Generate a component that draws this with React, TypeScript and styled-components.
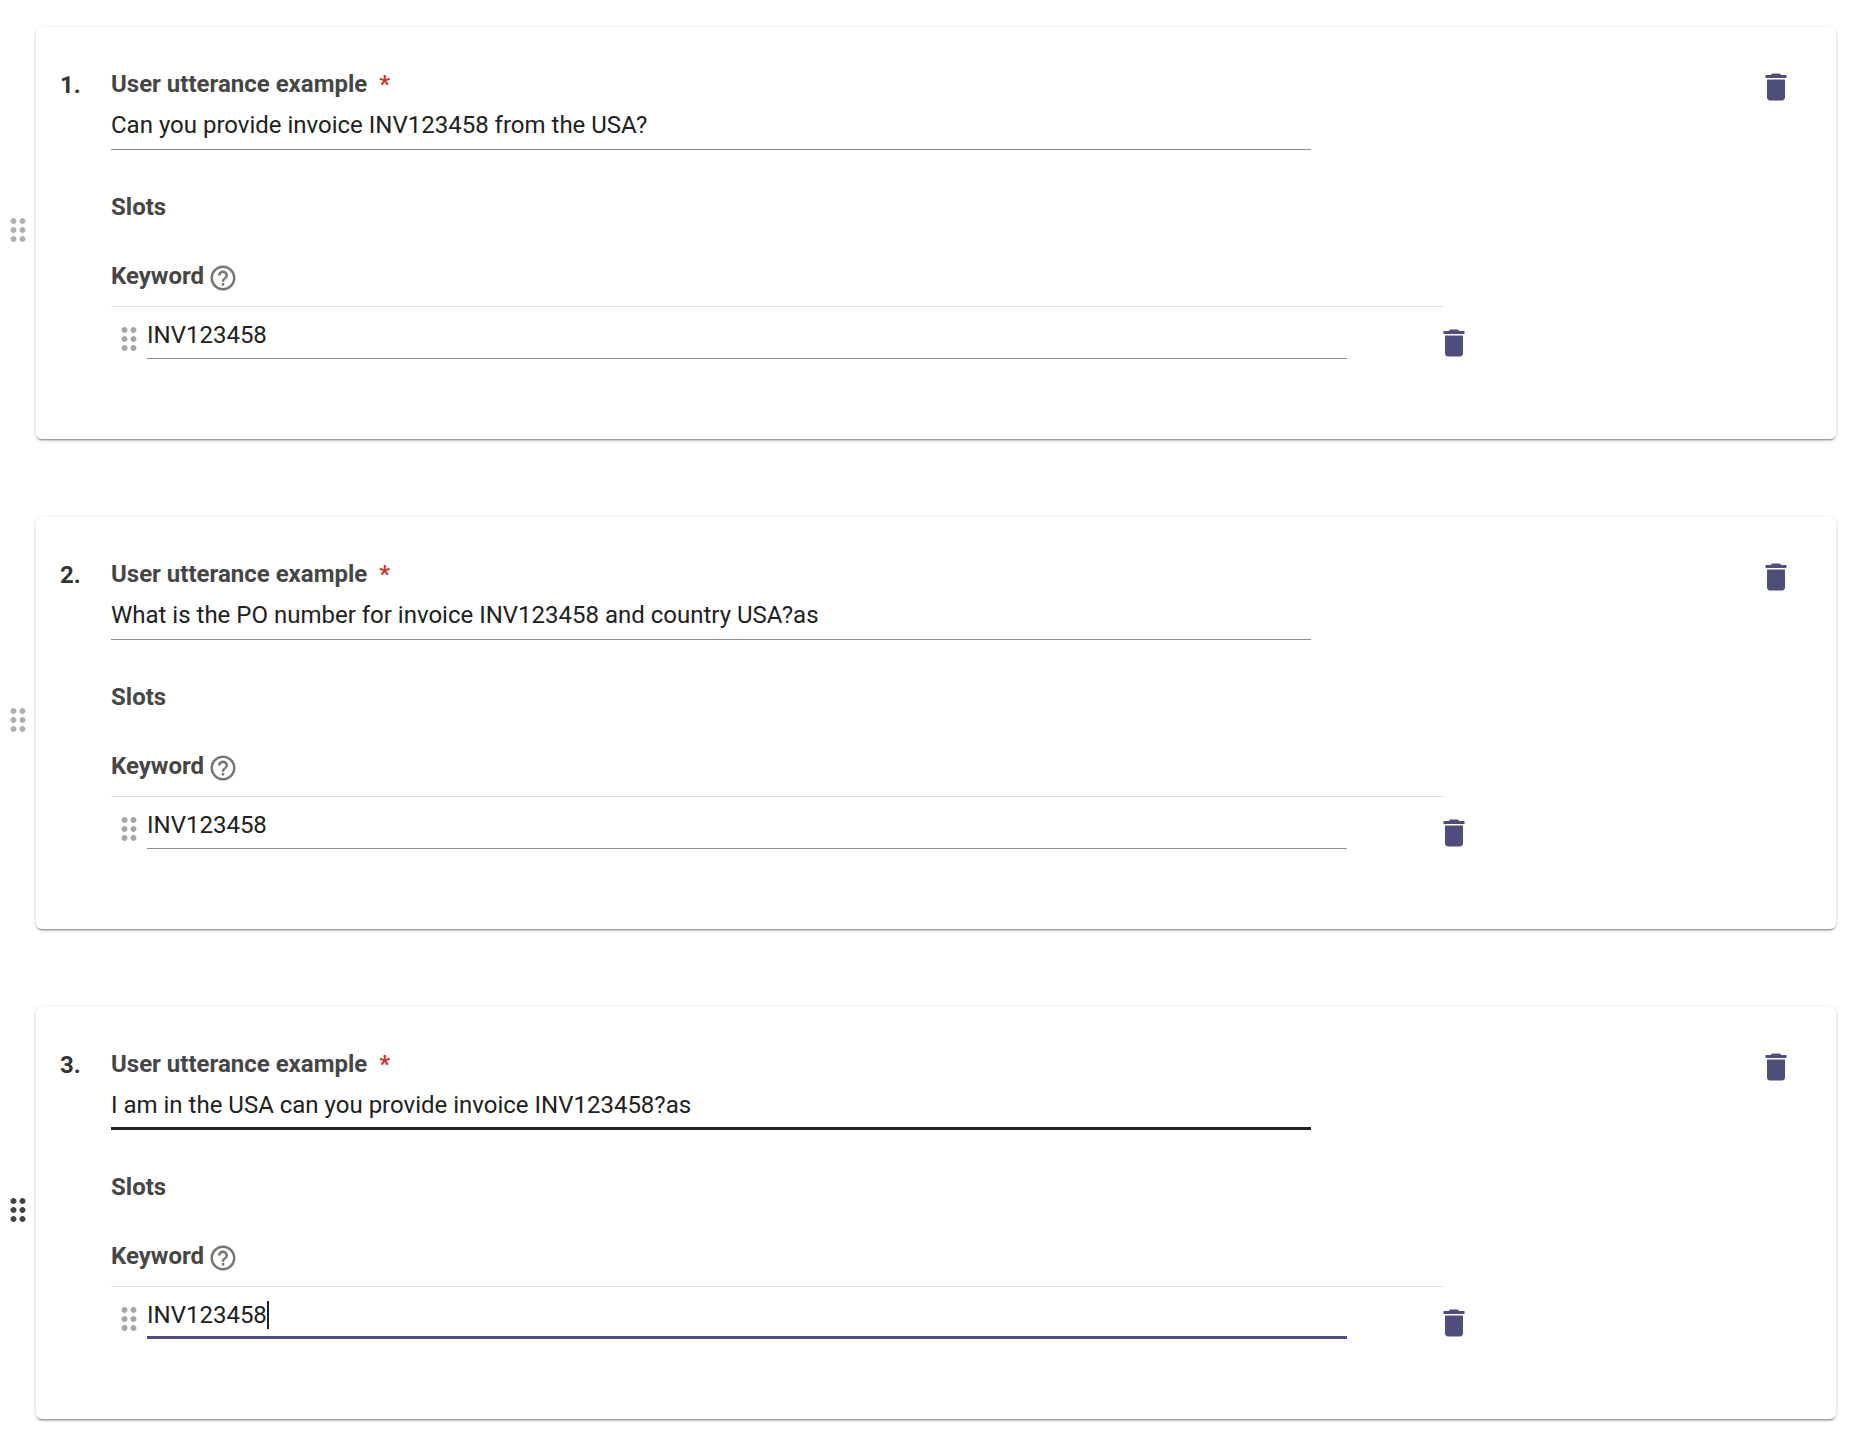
import { useState } from "react";
import styled, { createGlobalStyle } from "styled-components";

const GlobalStyle = createGlobalStyle`
  * { box-sizing: border-box; }
  body {
    margin: 0;
    background: #fff;
    color: #212121;
    font-family: Roboto, "Liberation Sans", sans-serif;
    font-size: 24px;
    line-height: 28px;
  }
`;

const ExampleList = styled.ol`
  display: flex;
  flex-direction: column;
  gap: 78px;
  margin: 0;
  padding: 27px 26px 19px 0;
  list-style: none;
`;

const ExampleRow = styled.li`
  display: flex;
  align-items: center;
`;

const HandleColumn = styled.div`
  flex: none;
  padding-bottom: 6px;
`;

const IconButton = styled.button<{ $color: string; $height: number }>`
  display: flex;
  flex: none;
  align-items: center;
  justify-content: center;
  width: 36px;
  height: ${(p) => p.$height}px;
  padding: 0;
  border: 0;
  background: none;
  color: ${(p) => p.$color};
  cursor: pointer;
`;

const Icon = styled.svg<{ $size: number }>`
  display: block;
  width: ${(p) => p.$size}px;
  height: ${(p) => p.$size}px;
  fill: currentColor;
`;

const Card = styled.section`
  display: flex;
  flex: 1;
  align-items: flex-start;
  min-width: 0;
  padding: 38px 42px 74px 24px;
  border-radius: 6px;
  background: #fff;
  box-shadow:
    0 3px 1px -2px rgba(0, 0, 0, 0.24),
    0 2px 2px 0 rgba(0, 0, 0, 0.16),
    0 1px 5px 0 rgba(0, 0, 0, 0.12);
`;

const Position = styled.span`
  flex: none;
  width: 51px;
  padding-top: 6px;
  color: #333;
  font-weight: 700;
`;

const Content = styled.div`
  flex: 1;
  min-width: 0;
  padding-top: 5px;
`;

const Label = styled.label`
  display: block;
  color: #464646;
  font-weight: 700;
`;

const Required = styled.span`
  margin-left: 6px;
  color: #c9372c;
`;

const SlotsTitle = styled.h3`
  margin: 43px 0 41px;
  color: #464646;
  font-size: 24px;
  font-weight: 700;
  line-height: 28px;
`;

type LineState = "rest" | "hover" | "focus";

const lineStyles: Record<LineState, string> = {
  rest: "1px solid #8f8f8f",
  hover: "3px solid #212121",
  focus: "3px solid #4f4d7b",
};

const Field = styled.div<{ $line: LineState }>`
  display: flex;
  align-items: flex-start;
  width: 100%;
  max-width: 1200px;
  height: 38px;
  border-bottom: ${(p) => lineStyles[p.$line]};
`;

const UtteranceField = styled(Field)`
  height: 39px;
  margin-top: 13px;
`;

const TextInput = styled.input<{ $hug: boolean }>`
  ${(p) => (p.$hug ? "field-sizing: content;" : "flex: 1;")}
  min-width: 0;
  height: 28px;
  padding: 0;
  border: 0;
  outline: 0;
  background: none;
  color: #212121;
  font: inherit;
  caret-color: transparent;
`;

const Caret = styled.span`
  width: 2px;
  height: 28px;
  background: #212121;
`;

const SlotGroup = styled.div`
  max-width: 1361px;
`;

const SlotHeader = styled.div`
  display: flex;
  gap: 4px;
  height: 45px;
  margin-right: 28px;
  border-bottom: 1px solid #e0e0e0;
`;

const HelpButton = styled(IconButton)`
  width: 30px;
  margin-top: 1px;
`;

const SlotRow = styled.div`
  display: flex;
  align-items: flex-start;
  padding-top: 14px;
`;

const SlotEnd = styled.div`
  display: flex;
  flex: 1;
  justify-content: flex-end;
`;

const PATHS = {
  drag: "M11 18c0 1.1-.9 2-2 2s-2-.9-2-2 .9-2 2-2 2 .9 2 2zm-2-8c-1.1 0-2 .9-2 2s.9 2 2 2 2-.9 2-2-.9-2-2-2zm0-6c-1.1 0-2 .9-2 2s.9 2 2 2 2-.9 2-2-.9-2-2-2zm6 4c1.1 0 2-.9 2-2s-.9-2-2-2-2 .9-2 2 .9 2 2 2zm0 2c-1.1 0-2 .9-2 2s.9 2 2 2 2-.9 2-2-.9-2-2-2zm0 6c-1.1 0-2 .9-2 2s.9 2 2 2 2-.9 2-2-.9-2-2-2z",
  trash:
    "M6 19c0 1.1.9 2 2 2h8c1.1 0 2-.9 2-2V7H6v12zM19 4h-3.5l-1-1h-5l-1 1H5v2h14V4z",
  help: "M11 18h2v-2h-2v2zm1-16C6.48 2 2 6.48 2 12s4.48 10 10 10 10-4.48 10-10S17.52 2 12 2zm0 18c-4.41 0-8-3.59-8-8s3.59-8 8-8 8 3.59 8 8-3.59 8-8 8zm0-14c-2.21 0-4 1.79-4 4h2c0-1.1.9-2 2-2s2 .9 2 2c0 2-3 1.75-3 5h2c0-2.25 3-2.5 3-5 0-2.21-1.79-4-4-4z",
};

function Glyph({ name, size = 36 }: { name: keyof typeof PATHS; size?: number }) {
  return (
    <Icon $size={size} viewBox="0 0 24 24" aria-hidden="true">
      <path d={PATHS[name]} />
    </Icon>
  );
}

interface Example {
  utterance: string;
  keyword: string;
  active: boolean;
}

const EXAMPLES: Example[] = [
  {
    utterance: "Can you provide invoice INV123458 from the USA?",
    keyword: "INV123458",
    active: false,
  },
  {
    utterance: "What is the PO number for invoice INV123458 and country USA?as",
    keyword: "INV123458",
    active: false,
  },
  {
    utterance: "I am in the USA can you provide invoice INV123458?as",
    keyword: "INV123458",
    active: true,
  },
];

function ExampleItem({ example, index }: { example: Example; index: number }) {
  const [utterance, setUtterance] = useState(example.utterance);
  const [keyword, setKeyword] = useState(example.keyword);
  const utteranceId = `utterance-${index}`;
  const keywordId = `keyword-${index}`;
  const { active } = example;

  return (
    <ExampleRow>
      <HandleColumn>
        <IconButton
          type="button"
          $color={active ? "#424242" : "#b0b0b0"}
          $height={36}
          aria-label="Reorder example"
        >
          <Glyph name="drag" />
        </IconButton>
      </HandleColumn>
      <Card>
        <Position>{index + 1}.</Position>
        <Content>
          <Label htmlFor={utteranceId}>
            User utterance example <Required>*</Required>
          </Label>
          <UtteranceField $line={active ? "hover" : "rest"}>
            <TextInput
              id={utteranceId}
              $hug={false}
              value={utterance}
              onChange={(e) => setUtterance(e.target.value)}
              required
            />
          </UtteranceField>
          <SlotsTitle>Slots</SlotsTitle>
          <SlotGroup>
            <SlotHeader>
              <Label htmlFor={keywordId}>Keyword</Label>
              <HelpButton
                type="button"
                $color="#757575"
                $height={30}
                aria-label="About keywords"
              >
                <Glyph name="help" size={30} />
              </HelpButton>
            </SlotHeader>
            <SlotRow>
              <IconButton
                type="button"
                $color="#a6a6a6"
                $height={36}
                aria-label="Reorder slot"
              >
                <Glyph name="drag" />
              </IconButton>
              <Field $line={active ? "focus" : "rest"}>
                <TextInput
                  id={keywordId}
                  $hug={active}
                  value={keyword}
                  onChange={(e) => setKeyword(e.target.value)}
                />
                {active && <Caret />}
              </Field>
              <SlotEnd>
                <IconButton
                  type="button"
                  $color="#4f4d7b"
                  $height={44}
                  aria-label="Delete slot"
                >
                  <Glyph name="trash" />
                </IconButton>
              </SlotEnd>
            </SlotRow>
          </SlotGroup>
        </Content>
        <IconButton
          type="button"
          $color="#4f4d7b"
          $height={44}
          aria-label="Delete example"
        >
          <Glyph name="trash" />
        </IconButton>
      </Card>
    </ExampleRow>
  );
}

export default function App() {
  return (
    <>
      <GlobalStyle />
      <ExampleList>
        {EXAMPLES.map((example, index) => (
          <ExampleItem key={index} example={example} index={index} />
        ))}
      </ExampleList>
    </>
  );
}
